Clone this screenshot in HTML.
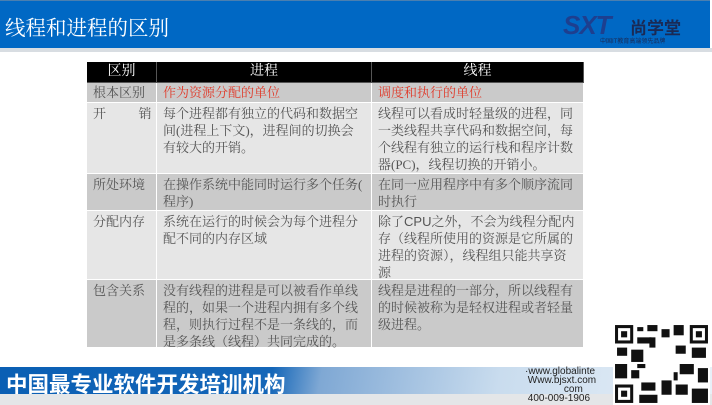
<!DOCTYPE html>
<html><head><meta charset="utf-8"><style>
body{margin:0;width:712px;height:405px;overflow:hidden;background:#fff;position:relative;font-family:"Liberation Serif","Noto Serif CJK SC",serif}
.hdr{position:absolute;left:0;top:0;width:710px;height:48px;background:#0068c4;border-top:1px solid #4a7fb0}
.hdr .t{position:absolute;left:5px;top:10px;color:#fff;font-size:20.5px;font-family:"Liberation Serif","Noto Serif CJK SC",serif}
.line{position:absolute;left:0;top:48px;width:712px;height:4px;background:#d8dde2}
.c{position:absolute;box-sizing:border-box;border-right:1px solid #fff;border-bottom:1px solid #fff;padding:2px 0 0 6px;font-size:13px;line-height:17px;color:#555;white-space:nowrap}
.h{background:#000;color:#fff;text-align:center;padding:1px 0 0 0;border-color:#555;font-size:14px;line-height:18px}
.g{background:#cacaca}.l{background:#e6e6e6}
.red{color:#e03a2a}
.ft{position:absolute;left:0;top:367px;width:712px;height:27px;background:linear-gradient(100deg,#0a5fb4 0%,#1466b8 38%,#7fa8d4 45%,#c9dcee 70%,#e8f0f8 100%)}
.ft .t{position:absolute;left:6px;top:1px;color:#fff;font-size:21.5px;font-family:"Liberation Sans","Noto Sans CJK SC",sans-serif;font-weight:bold}
.bot{position:absolute;left:0;top:394px;width:712px;height:11px;background:#e4e6e8}
.url{position:absolute;left:525px;top:367px;font-family:"Liberation Sans",sans-serif;font-size:10px;line-height:9px;color:#222}
.qr{position:absolute;left:613px;top:323px;width:97px;height:82px;background:#fff}
</style></head><body>
<div class="hdr"><div class="t">线程和进程的区别</div>
<div style="position:absolute;left:563px;top:9px;color:#1d3f8f;font:italic bold 26px 'Liberation Sans',sans-serif;letter-spacing:-1px">SXT</div>
<div style="position:absolute;left:630px;top:13px;color:#1a2a55;font:bold 17px 'Liberation Sans','Noto Sans CJK SC',sans-serif">尚学堂</div>
<div style="position:absolute;left:600px;top:35px;color:#1a2a55;font:6px 'Liberation Sans','Noto Sans CJK SC',sans-serif">中国IT教育高端领先品牌</div>
</div>
<div class="line"></div>

<div class="c h" style="left:87px;top:62px;width:70px;height:21px">区别</div>
<div class="c h" style="left:157px;top:62px;width:215px;height:21px">进程</div>
<div class="c h" style="left:372px;top:62px;width:212px;height:21px">线程</div>

<div class="c g" style="left:87px;top:83px;width:70px;height:20px;padding-top:1px">根本区别</div>
<div class="c g red" style="left:157px;top:83px;width:215px;height:20px;padding-top:1px">作为资源分配的单位</div>
<div class="c g red" style="left:372px;top:83px;width:212px;height:20px;padding-top:1px">调度和执行的单位</div>

<div class="c l" style="left:87px;top:103px;width:70px;height:71px">开&nbsp;&nbsp;&nbsp;&nbsp;&nbsp;&nbsp;&nbsp;&nbsp;&nbsp;&nbsp;销</div>
<div class="c l" style="left:157px;top:103px;width:215px;height:71px">每个进程都有独立的代码和数据空<br>间(进程上下文)，进程间的切换会<br>有较大的开销。</div>
<div class="c l" style="left:372px;top:103px;width:212px;height:71px">线程可以看成时轻量级的进程，同<br>一类线程共享代码和数据空间，每<br>个线程有独立的运行栈和程序计数<br>器(PC)，线程切换的开销小。</div>

<div class="c g" style="left:87px;top:174px;width:70px;height:37px">所处环境</div>
<div class="c g" style="left:157px;top:174px;width:215px;height:37px">在操作系统中能同时运行多个任务(<br>程序)</div>
<div class="c g" style="left:372px;top:174px;width:212px;height:37px">在同一应用程序中有多个顺序流同<br>时执行</div>

<div class="c l" style="left:87px;top:211px;width:70px;height:69px">分配内存</div>
<div class="c l" style="left:157px;top:211px;width:215px;height:69px">系统在运行的时候会为每个进程分<br>配不同的内存区域</div>
<div class="c l" style="left:372px;top:211px;width:212px;height:69px">除了<span style="font-family:'Liberation Sans',sans-serif">CPU</span>之外，不会为线程分配内<br>存（线程所使用的资源是它所属的<br>进程的资源），线程组只能共享资<br>源</div>

<div class="c g" style="left:87px;top:280px;width:70px;height:68px">包含关系</div>
<div class="c g" style="left:157px;top:280px;width:215px;height:68px">没有线程的进程是可以被看作单线<br>程的，如果一个进程内拥有多个线<br>程，则执行过程不是一条线的，而<br>是多条线（线程）共同完成的。</div>
<div class="c g" style="left:372px;top:280px;width:212px;height:68px">线程是进程的一部分，所以线程有<br>的时候被称为是轻权进程或者轻量<br>级进程。</div>

<div class="ft"><div class="t">中国最专业软件开发培训机构</div></div>
<div class="bot"></div>
<div class="url">·www.globalinte<br>&nbsp;Www.bjsxt.com<br>&nbsp;&nbsp;&nbsp;&nbsp;&nbsp;&nbsp;&nbsp;&nbsp;&nbsp;&nbsp;&nbsp;&nbsp;&nbsp;&nbsp;com<br>&nbsp;400-009-1906</div>
<svg class="qr" viewBox="0 0 96 80" preserveAspectRatio="none">
<rect width="96" height="80" fill="#fff"/>
<g fill="#111">
<rect x="2" y="2" width="18" height="18"/><rect x="76" y="2" width="18" height="18"/><rect x="2" y="60" width="18" height="18"/>
<rect x="24" y="4" width="6" height="4"/><rect x="34" y="2" width="10" height="6"/><rect x="48" y="6" width="8" height="8"/><rect x="60" y="2" width="10" height="10"/>
<rect x="24" y="14" width="14" height="6"/><rect x="4" y="24" width="10" height="8"/><rect x="18" y="26" width="12" height="12"/><rect x="62" y="22" width="10" height="8"/><rect x="78" y="24" width="14" height="10"/>
<rect x="2" y="40" width="12" height="14"/><rect x="18" y="46" width="8" height="8"/><rect x="66" y="40" width="14" height="10"/><rect x="84" y="44" width="10" height="14"/>
<rect x="28" y="58" width="14" height="8"/><rect x="48" y="56" width="10" height="14"/><rect x="62" y="60" width="12" height="10"/><rect x="78" y="64" width="16" height="14"/><rect x="26" y="70" width="18" height="8"/>
<rect x="36" y="14" width="6" height="10"/><rect x="24" y="40" width="8" height="4"/><rect x="60" y="48" width="4" height="8"/>
</g>
<g fill="#fff"><rect x="5" y="5" width="12" height="12"/><rect x="79" y="5" width="12" height="12"/><rect x="5" y="63" width="12" height="12"/></g>
<g fill="#111"><rect x="8" y="8" width="6" height="6"/><rect x="82" y="8" width="6" height="6"/><rect x="8" y="66" width="6" height="6"/></g>
<rect x="34" y="28" width="26" height="20" fill="#fff"/>
</svg>
</body></html>
